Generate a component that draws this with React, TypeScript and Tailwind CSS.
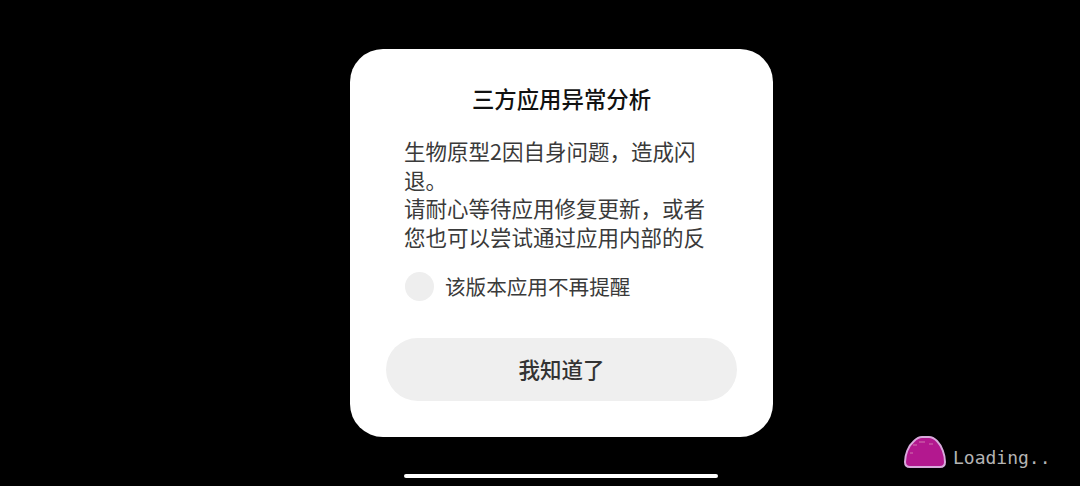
export default function App() {
  return (
    <div className="relative flex h-[486px] w-[1080px] flex-col items-start overflow-hidden bg-black pl-[350px]" style={{ fontFamily: '"Noto Sans CJK SC", sans-serif' }}>
      <div className="mt-[49px] flex h-[388px] w-[423px] flex-col rounded-[33px] bg-white pl-[36px] pr-[36px]">
        <div className="mt-[34px] text-center text-[22.4px] font-medium leading-[30px] text-[#111]">三方应用异常分析</div>
        <div className="mt-[24px] pl-[18px] pr-[15px] text-[21.5px] leading-[28.5px] text-[#3a3a3a]">
          生物原型2因自身问题，造成闪退。<br />请耐心等待应用修复更新，或者您也可以尝试通过应用内部的反
        </div>
        <div className="mt-[20px] flex items-center gap-[11px] pl-[19px]">
          <div className="h-[29px] w-[29px] rounded-full bg-[#eeeeee]" />
          <span className="text-[20.6px] leading-[30px] text-[#3a3a3a]">该版本应用不再提醒</span>
        </div>
        <button className="mt-[37px] h-[63px] w-[351px] rounded-full bg-[#efefef] text-[21.5px] font-medium text-[#333]">我知道了</button>
      </div>
      <div className="ml-[54px] mt-[37px] h-[4px] w-[314px] rounded-full bg-white" />
      <div className="absolute left-[903px] top-[435px] flex items-start gap-[6px]">
        <svg width="44" height="35" viewBox="0 0 44 35">
          <path d="M2 27C2 20 5 11 11 6C14 3 16 2 19 2H26C29 2 31 3 34 6C39 11 42 20 42 27C42 30 40 32 37 32H7C4 32 2 30 2 27Z" fill="#b3188f" stroke="#d9a9dc" strokeWidth="2" />
          <path d="M10 9H14V11H10ZM16 6H22V8H16ZM7 17H10V19H7ZM26 8H30V10H26Z" fill="#c2469f" />
        </svg>
        <span className="mt-[9px] text-[18px] leading-[28px] text-[#b4b4b4]" style={{ fontFamily: '"DejaVu Sans Mono", monospace' }}>Loading..</span>
      </div>
    </div>
  );
}
